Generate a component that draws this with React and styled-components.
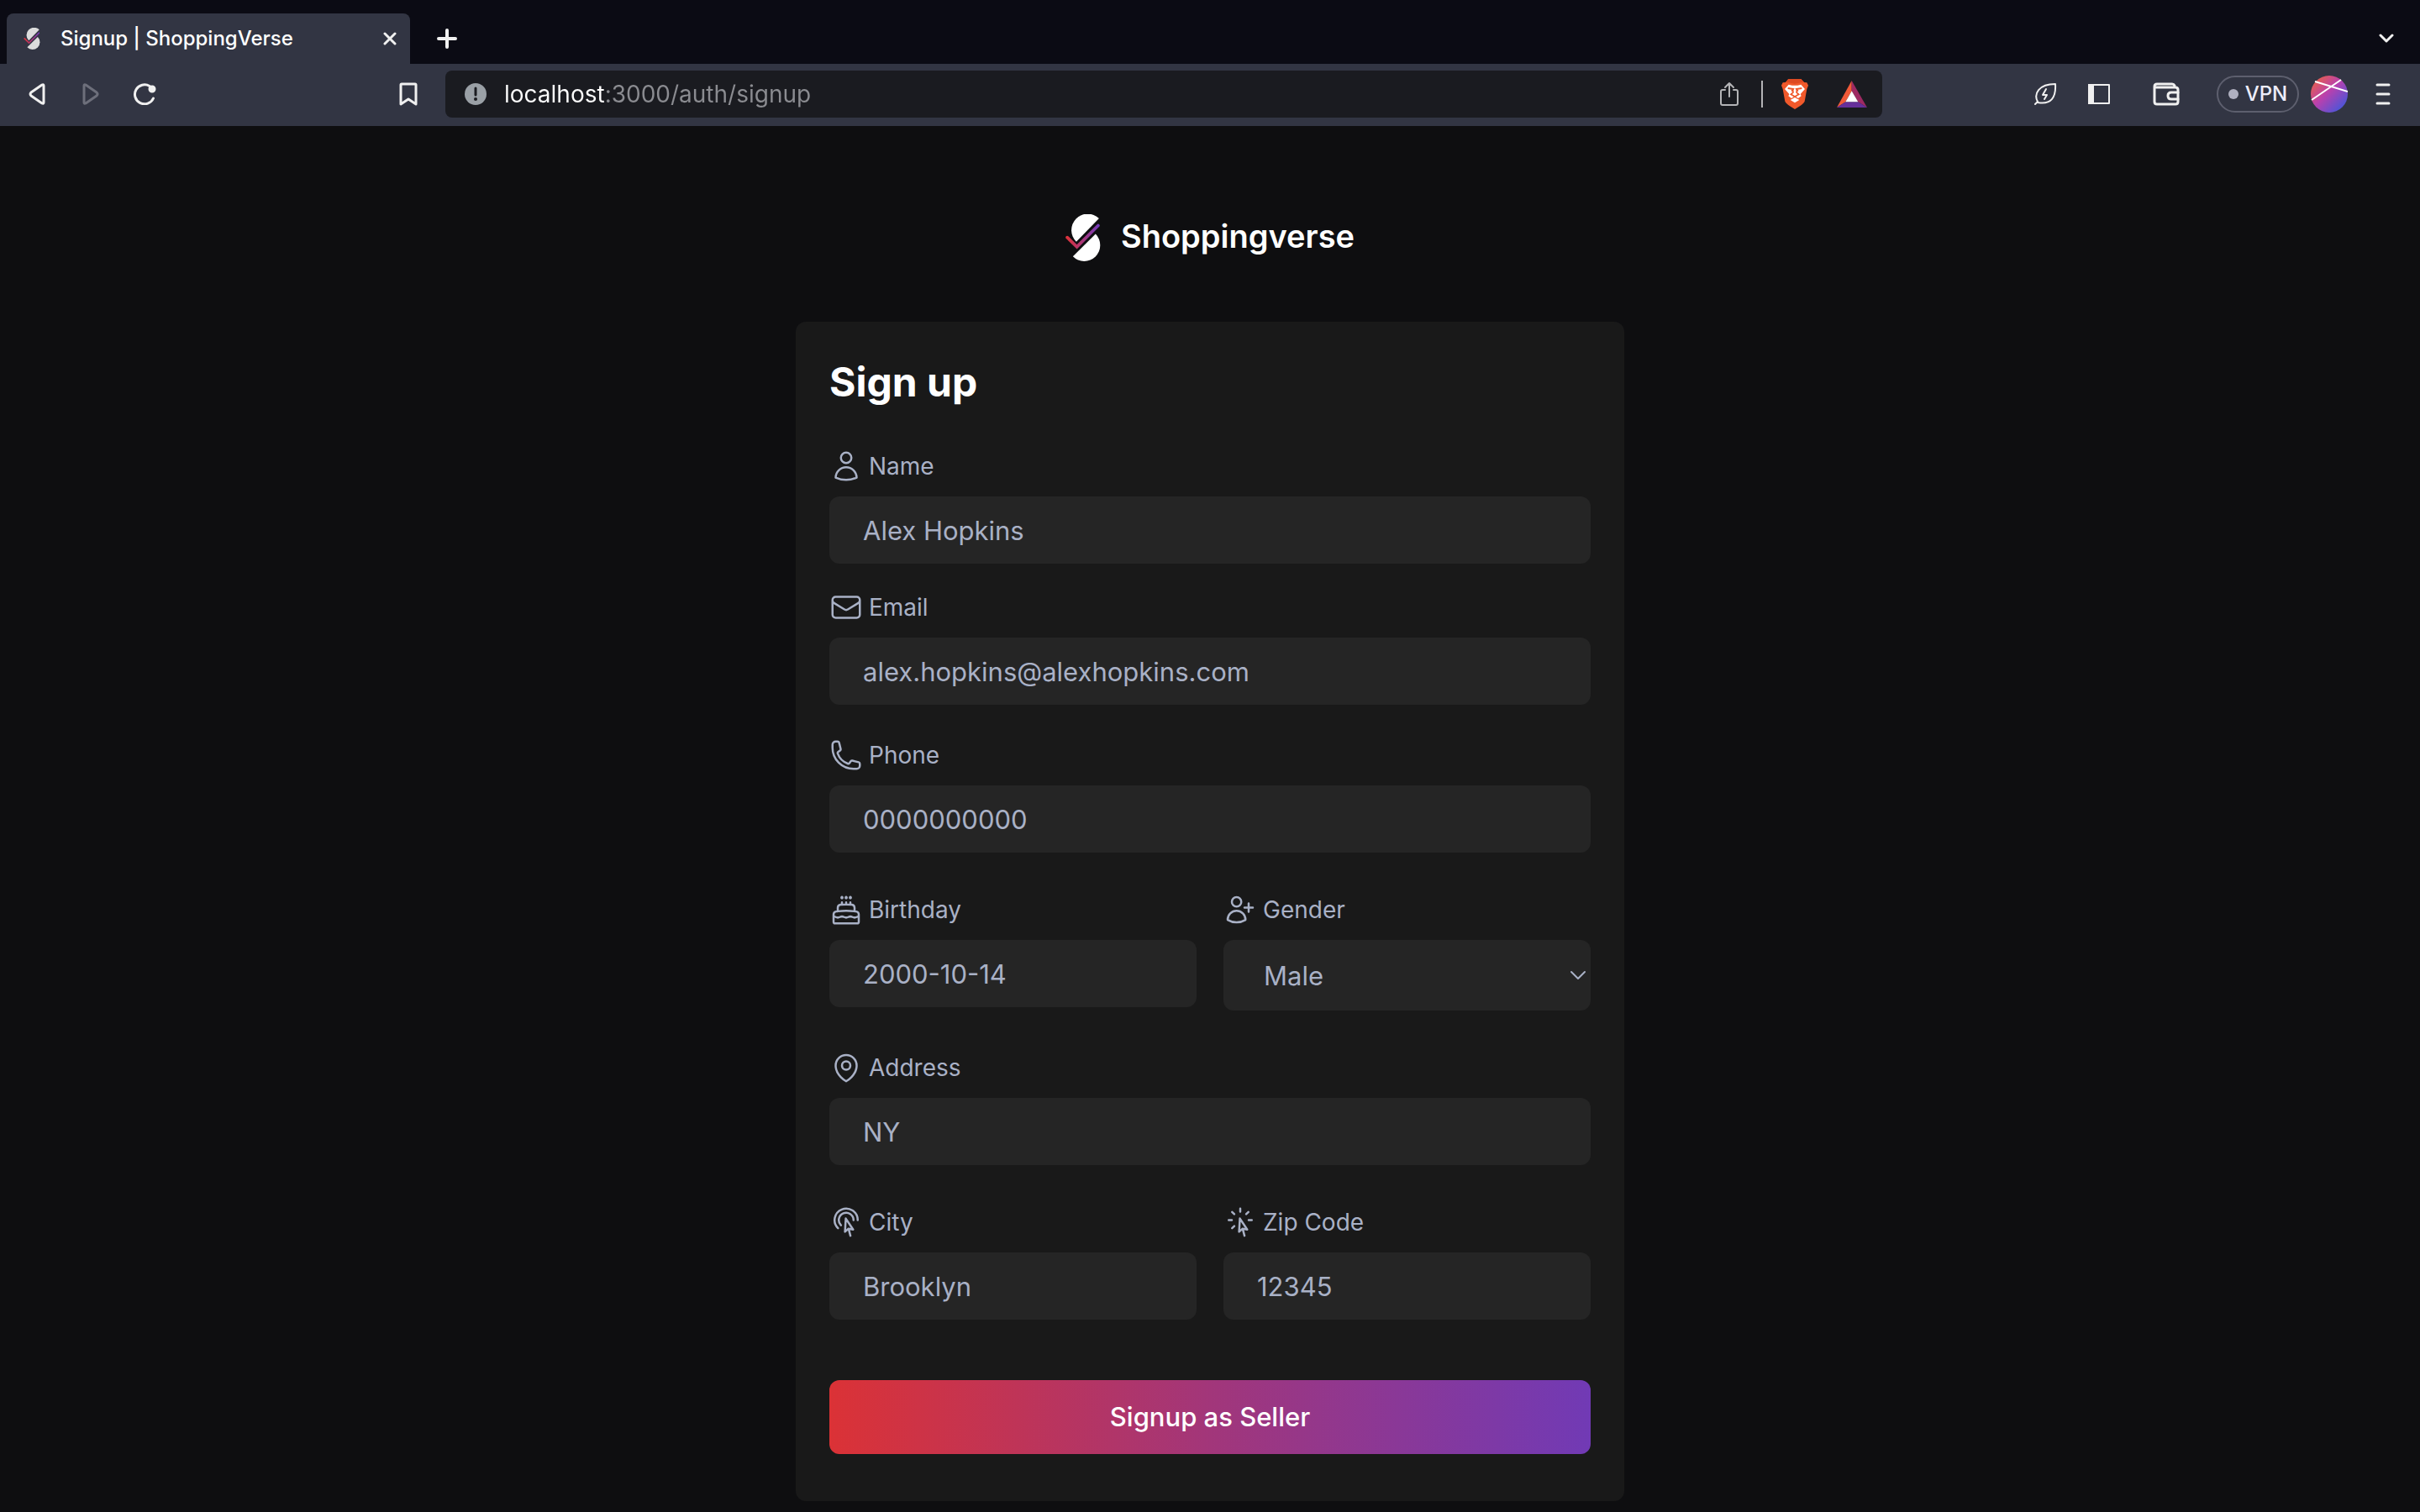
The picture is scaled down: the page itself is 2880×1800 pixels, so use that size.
import React from "react";
import styled, { createGlobalStyle } from "styled-components";
import {
  HiOutlineUser,
  HiOutlineEnvelope,
  HiOutlinePhone,
  HiOutlineCake,
  HiOutlineUserPlus,
  HiOutlineMapPin,
  HiOutlineCursorArrowRipple,
  HiOutlineCursorArrowRays,
} from "react-icons/hi2";

const GlobalStyle = createGlobalStyle`
  * { box-sizing: border-box; }
  body {
    margin: 0;
    background: #0e0e10;
    color: #ffffff;
    font-family: Inter, "Liberation Sans", sans-serif;
  }
  button, input, select { font-family: inherit; }
  svg { display: block; }
`;

const Window = styled.div`
  min-height: 100vh;
  display: flex;
  flex-direction: column;
`;

const TabStrip = styled.header`
  height: 76px;
  padding: 16px 20px 0 8px;
  display: flex;
  background: #0b0b14;
`;

const Tab = styled.div`
  width: 480px;
  padding: 0 10px 0 20px;
  display: flex;
  align-items: center;
  border-radius: 8px 8px 0 0;
  background: #323543;
`;

const TabTitle = styled.span`
  flex: 1;
  padding-left: 24px;
  font-size: 24px;
  line-height: 32px;
  font-weight: 500;
  white-space: nowrap;
`;

const IconButton = styled.button`
  width: ${(p) => p.$width || 40}px;
  height: 40px;
  padding: 0;
  flex: none;
  display: flex;
  align-items: center;
  justify-content: center;
  border: 0;
  background: none;
  color: ${(p) => (p.$dim ? "#6d6f7b" : "#f0f0f0")};
`;

const StripActions = styled.div`
  flex: 1;
  padding: 10px 0 0 24px;
  display: flex;
  justify-content: space-between;
`;

const Toolbar = styled.nav`
  height: 74px;
  padding: 0 24px 2px;
  display: flex;
  align-items: center;
  background: #323543;
`;

const NavGroup = styled.div`
  width: 482px;
  margin-right: 24px;
  display: flex;
  gap: 24px;

  & > :last-child { margin-left: auto; }
`;

const AddressBar = styled.div`
  flex: 1;
  height: 56px;
  padding: 0 18px 0 22px;
  display: flex;
  align-items: center;
  gap: 20px;
  border-radius: 8px;
  background: #1a1b20;
`;

const AddressInput = styled.input`
  flex: 1;
  min-width: 0;
  height: 40px;
  padding: 0;
  border: 0;
  outline: 0;
  font-size: 28px;
  color: #8b8c91;
  background: linear-gradient(90deg, #ffffff 120px, #8b8c91 120px);
  background-clip: text;
  -webkit-background-clip: text;
  -webkit-text-fill-color: transparent;
`;

const Divider = styled.span`
  width: 2px;
  height: 32px;
  background: #b4b4b6;
`;

const Extensions = styled.div`
  display: flex;
  gap: 32px;
`;

const ToolGroup = styled.div`
  padding-left: 174px;
  display: flex;
  align-items: center;
  gap: 40px;
`;

const ToolPair = styled.div`
  display: flex;
  gap: 24px;
`;

const ProfileGroup = styled.div`
  display: flex;
  align-items: center;
  gap: 14px;
`;

const MenuSlot = styled.div`
  padding-left: 8px;
`;

const VpnButton = styled.button`
  width: 98px;
  height: 44px;
  padding: 0;
  display: flex;
  align-items: center;
  justify-content: center;
  gap: 8px;
  border: 2px solid #5d5f6e;
  border-radius: 22px;
  background: none;
  color: #ecedfa;
  font-size: 24px;
  line-height: 32px;
  font-weight: 500;
`;

const VpnDot = styled.span`
  width: 12px;
  height: 12px;
  border-radius: 50%;
  background: #afb0c0;
`;

const Page = styled.main`
  flex: 1;
  padding: 105px 24px 12px;
  display: flex;
  flex-direction: column;
  align-items: center;
  gap: 72px;
`;

const Brand = styled.a`
  display: flex;
  align-items: flex-start;
  gap: 24px;
  color: #ffffff;
  text-decoration: none;
  font-size: 38px;
  line-height: 52px;
  font-weight: 600;
`;

const Card = styled.form`
  width: 100%;
  max-width: 986px;
  padding: 40px 40px 56px;
  display: flex;
  flex-direction: column;
  border-radius: 12px;
  background: #191919;
`;

const Title = styled.h1`
  margin: 0 0 48px;
  font-size: 48px;
  line-height: 64px;
  font-weight: 700;
`;

const Row = styled.div`
  margin-bottom: ${(p) => p.$space}px;
  display: flex;
  align-items: flex-start;
  gap: 32px;
`;

const FieldBox = styled.div`
  flex: 1;
  min-width: 0;
`;

const Label = styled.label`
  margin-bottom: 16px;
  display: flex;
  align-items: center;
  gap: 7px;
  color: #a9b1c6;
  font-size: 28px;
  line-height: 40px;

  svg { width: 40px; height: 40px; }
`;

const TextInput = styled.input`
  width: 100%;
  height: 80px;
  padding: 0 40px;
  display: block;
  border: 0;
  outline: 0;
  border-radius: 12px;
  background: #252525;
  color: #a9b1c6;
  font-size: 31px;
`;

const SelectWrap = styled.div`
  display: grid;
  align-items: center;
  color: #a9b1c6;

  & > * { grid-area: 1 / 1; }
  & > svg {
    justify-self: end;
    margin-right: 5px;
    pointer-events: none;
  }
`;

const Select = styled.select`
  width: 100%;
  height: 84px;
  padding: 0 48px;
  appearance: none;
  border: 0;
  outline: 0;
  border-radius: 12px;
  background: #252525;
  color: inherit;
  font-size: 31px;
`;

const Submit = styled.button`
  height: 88px;
  border: 0;
  border-radius: 12px;
  background: linear-gradient(90deg, #db3236, #a2367a 50%, #713ab5);
  color: #ffffff;
  font-size: 31px;
  line-height: 40px;
  font-weight: 500;
`;

function Logo({ id, width, height, fill }) {
  return (
    <svg width={width} height={height} viewBox="88 75 122 166" aria-hidden="true">
      <defs>
        <linearGradient id={id} x1="88" y1="0" x2="208" y2="0" gradientUnits="userSpaceOnUse">
          <stop offset="0" stopColor="#e03238" />
          <stop offset="1" stopColor="#6f3bbd" />
        </linearGradient>
      </defs>
      <path d="M205 90A57 57 0 0 0 125 172Z" fill={fill} />
      <path d="M193 145A56 56 0 0 1 113 224Z" fill={fill} />
      <path d="M93 157L127 190L202 115" fill="none" stroke={`url(#${id})`} strokeWidth="11" strokeLinecap="round" />
    </svg>
  );
}

function Glyph({ w, h, sw = 3, children }) {
  return (
    <svg
      width={w}
      height={h}
      viewBox={`0 0 ${w} ${h}`}
      fill="none"
      stroke="currentColor"
      strokeWidth={sw}
      strokeLinecap="round"
      strokeLinejoin="round"
      aria-hidden="true"
    >
      {children}
    </svg>
  );
}

function BraveIcon() {
  return (
    <svg width="32" height="36" viewBox="0 0 96 108" aria-hidden="true">
      <path d="M25 0H70L81 12L91 13L96 23L91 36L83 80Q80 87 66 97L48 108L30 97Q16 87 13 80L5 36L0 23L5 13L15 12Z" fill="#f0592b" />
      <path d="M25 0H70L81 12L70 13L48 17L26 13L15 12Z" fill="#dd4a22" />
      <path d="M26 20L38 23H58L70 20L84 36L68 54L71 61L60 69L48 61L36 69L25 61L28 54L12 36Z" fill="#fff" />
      <path d="M32 75L48 66L64 75L48 85Z" fill="#fff" />
      <path d="M23 33L42 36L37 44M73 33L54 36L59 44" fill="none" stroke="#f0592b" strokeWidth="6" />
      <path d="M40 36L42 48L34 55L48 63L62 55L54 48L56 36" fill="none" stroke="#f0592b" strokeWidth="5" />
    </svg>
  );
}

function BatIcon() {
  return (
    <svg width="36" height="32" viewBox="0 0 108 96" aria-hidden="true">
      <path d="M53 0L0 96L31 76L53 37Z" fill="#f15a38" />
      <path d="M53 0L108 96L76 76L53 37Z" fill="#9e2a62" />
      <path d="M0 96L31 76H76L108 96Z" fill="#66309a" />
      <path d="M53 37L31 76H76Z" fill="#fff" />
    </svg>
  );
}

function AvatarIcon() {
  return (
    <svg width="44" height="44" viewBox="0 0 44 44" aria-hidden="true">
      <defs>
        <linearGradient id="avatar" x1="0.1" y1="0.1" x2="0.9" y2="0.9">
          <stop offset="0" stopColor="#e8604a" />
          <stop offset="0.45" stopColor="#b940ae" />
          <stop offset="1" stopColor="#4357dc" />
        </linearGradient>
      </defs>
      <circle cx="22" cy="22" r="22" fill="url(#avatar)" />
      <path d="M5 7L44 19M1 29L36 5" stroke="#fff" strokeWidth="2" />
    </svg>
  );
}

function Field({ id, label, icon: Icon, value, type = "text" }) {
  return (
    <FieldBox>
      <Label htmlFor={id}>
        <Icon aria-hidden="true" />
        {label}
      </Label>
      <TextInput id={id} name={id} type={type} defaultValue={value} />
    </FieldBox>
  );
}

function BrowserChrome() {
  return (
    <>
      <TabStrip>
        <Tab>
          <Logo id="favicon" width={20} height={26} fill="#dcdcdc" />
          <TabTitle>Signup | ShoppingVerse</TabTitle>
          <IconButton $width={28} aria-label="Close tab">
            <Glyph w={16} h={16} sw={3}><path d="M2 2L14 14M14 2L2 14" /></Glyph>
          </IconButton>
        </Tab>
        <StripActions>
          <IconButton aria-label="New tab">
            <Glyph w={24} h={24} sw={4}><path d="M12 2V22M2 12H22" /></Glyph>
          </IconButton>
          <IconButton aria-label="Search tabs">
            <Glyph w={20} h={12} sw={3}><path d="M3 2L10 9L17 2" /></Glyph>
          </IconButton>
        </StripActions>
      </TabStrip>
      <Toolbar>
        <NavGroup>
          <IconButton aria-label="Back">
            <Glyph w={20} h={26}><path d="M18 3V23Q18 25 16 24L3 15Q1 13 3 11L16 2Q18 1 18 3Z" /></Glyph>
          </IconButton>
          <IconButton $dim aria-label="Forward">
            <Glyph w={20} h={26}><path d="M2 3V23Q2 25 4 24L17 15Q19 13 17 11L4 2Q2 1 2 3Z" /></Glyph>
          </IconButton>
          <IconButton aria-label="Reload">
            <Glyph w={28} h={26}>
              <path d="M20 3.500A11.500 11.500 0 1 0 24.500 18" />
              <circle cx="23" cy="7" r="3" fill="currentColor" />
            </Glyph>
          </IconButton>
          <IconButton aria-label="Bookmark">
            <Glyph w={22} h={28}><path d="M3 2H19Q20 2 20 3V26L11 20L2 26V3Q2 2 3 2Z" /></Glyph>
          </IconButton>
        </NavGroup>
        <AddressBar>
          <svg width="28" height="28" viewBox="0 0 28 28" aria-hidden="true">
            <circle cx="14" cy="14" r="13" fill="#9aa0a6" />
            <path d="M14 7V15" stroke="#1a1b20" strokeWidth="3" strokeLinecap="round" />
            <circle cx="14" cy="20" r="2" fill="#1a1b20" />
          </svg>
          <AddressInput aria-label="Address" defaultValue="localhost:3000/auth/signup" />
          <IconButton $width={36} aria-label="Share">
            <svg width="24" height="30" viewBox="0 0 24 30" fill="none" stroke="#b4b4b6" strokeWidth="2" strokeLinecap="round" strokeLinejoin="round">
              <path d="M7 10H4Q2 10 2 12V26Q2 28 4 28H20Q22 28 22 26V12Q22 10 20 10H17M12 18V2M7 7L12 2L17 7" />
            </svg>
          </IconButton>
          <Divider />
          <Extensions>
            <IconButton $width={36} aria-label="Brave Shields"><BraveIcon /></IconButton>
            <IconButton $width={36} aria-label="Brave Rewards"><BatIcon /></IconButton>
          </Extensions>
        </AddressBar>
        <ToolGroup>
          <ToolPair>
            <IconButton aria-label="Energy saver">
              <Glyph w={28} h={28} sw={2}>
                <path d="M2 26L5 23M5 23C0 14 6 2 26 2C27 18 21 27 5 24Z" />
                <path d="M15 8L11 15H16L13 20" />
              </Glyph>
            </IconButton>
            <IconButton aria-label="Sidebar">
              <Glyph w={28} h={26} sw={2}>
                <path d="M2 2H26V24H2Z" />
                <path d="M1 1H8V25H1Z" fill="currentColor" stroke="none" />
              </Glyph>
            </IconButton>
          </ToolPair>
          <IconButton aria-label="Wallet">
            <Glyph w={32} h={28} sw={3}>
              <path d="M26 6V4Q25 2 23 2H5Q2 2 2 5V23Q2 26 5 26H27Q30 26 30 23V9Q30 6 27 6H4" />
              <path d="M30 12H22Q18 12 18 16T22 20H30" />
            </Glyph>
          </IconButton>
          <ProfileGroup>
            <VpnButton><VpnDot />VPN</VpnButton>
            <IconButton $width={44} aria-label="Profile"><AvatarIcon /></IconButton>
            <MenuSlot>
              <IconButton aria-label="Menu">
                <Glyph w={20} h={26} sw={3}><path d="M3 2H17M3 13H17M3 24H17" /></Glyph>
              </IconButton>
            </MenuSlot>
          </ProfileGroup>
        </ToolGroup>
      </Toolbar>
    </>
  );
}

export default function App() {
  return (
    <Window>
      <GlobalStyle />
      <BrowserChrome />
      <Page>
        <Brand href="#">
          <Logo id="brand" width={42} height={56} fill="#ffffff" />
          Shoppingverse
        </Brand>
        <Card onSubmit={(e) => e.preventDefault()}>
          <Title>Sign up</Title>
          <Row $space={32}>
            <Field id="name" label="Name" icon={HiOutlineUser} value="Alex Hopkins" />
          </Row>
          <Row $space={40}>
            <Field id="email" label="Email" type="email" icon={HiOutlineEnvelope} value="alex.hopkins@alexhopkins.com" />
          </Row>
          <Row $space={48}>
            <Field id="phone" label="Phone" type="tel" icon={HiOutlinePhone} value="0000000000" />
          </Row>
          <Row $space={48}>
            <Field id="birthday" label="Birthday" icon={HiOutlineCake} value="2000-10-14" />
            <FieldBox>
              <Label htmlFor="gender">
                <HiOutlineUserPlus aria-hidden="true" />
                Gender
              </Label>
              <SelectWrap>
                <Select id="gender" name="gender" defaultValue="Male">
                  <option>Male</option>
                  <option>Female</option>
                </Select>
                <Glyph w={20} h={12} sw={2}><path d="M2 2L10 10L18 2" /></Glyph>
              </SelectWrap>
            </FieldBox>
          </Row>
          <Row $space={48}>
            <Field id="address" label="Address" icon={HiOutlineMapPin} value="NY" />
          </Row>
          <Row $space={72}>
            <Field id="city" label="City" icon={HiOutlineCursorArrowRipple} value="Brooklyn" />
            <Field id="zip" label="Zip Code" icon={HiOutlineCursorArrowRays} value="12345" />
          </Row>
          <Submit type="submit">Signup as Seller</Submit>
        </Card>
      </Page>
    </Window>
  );
}
